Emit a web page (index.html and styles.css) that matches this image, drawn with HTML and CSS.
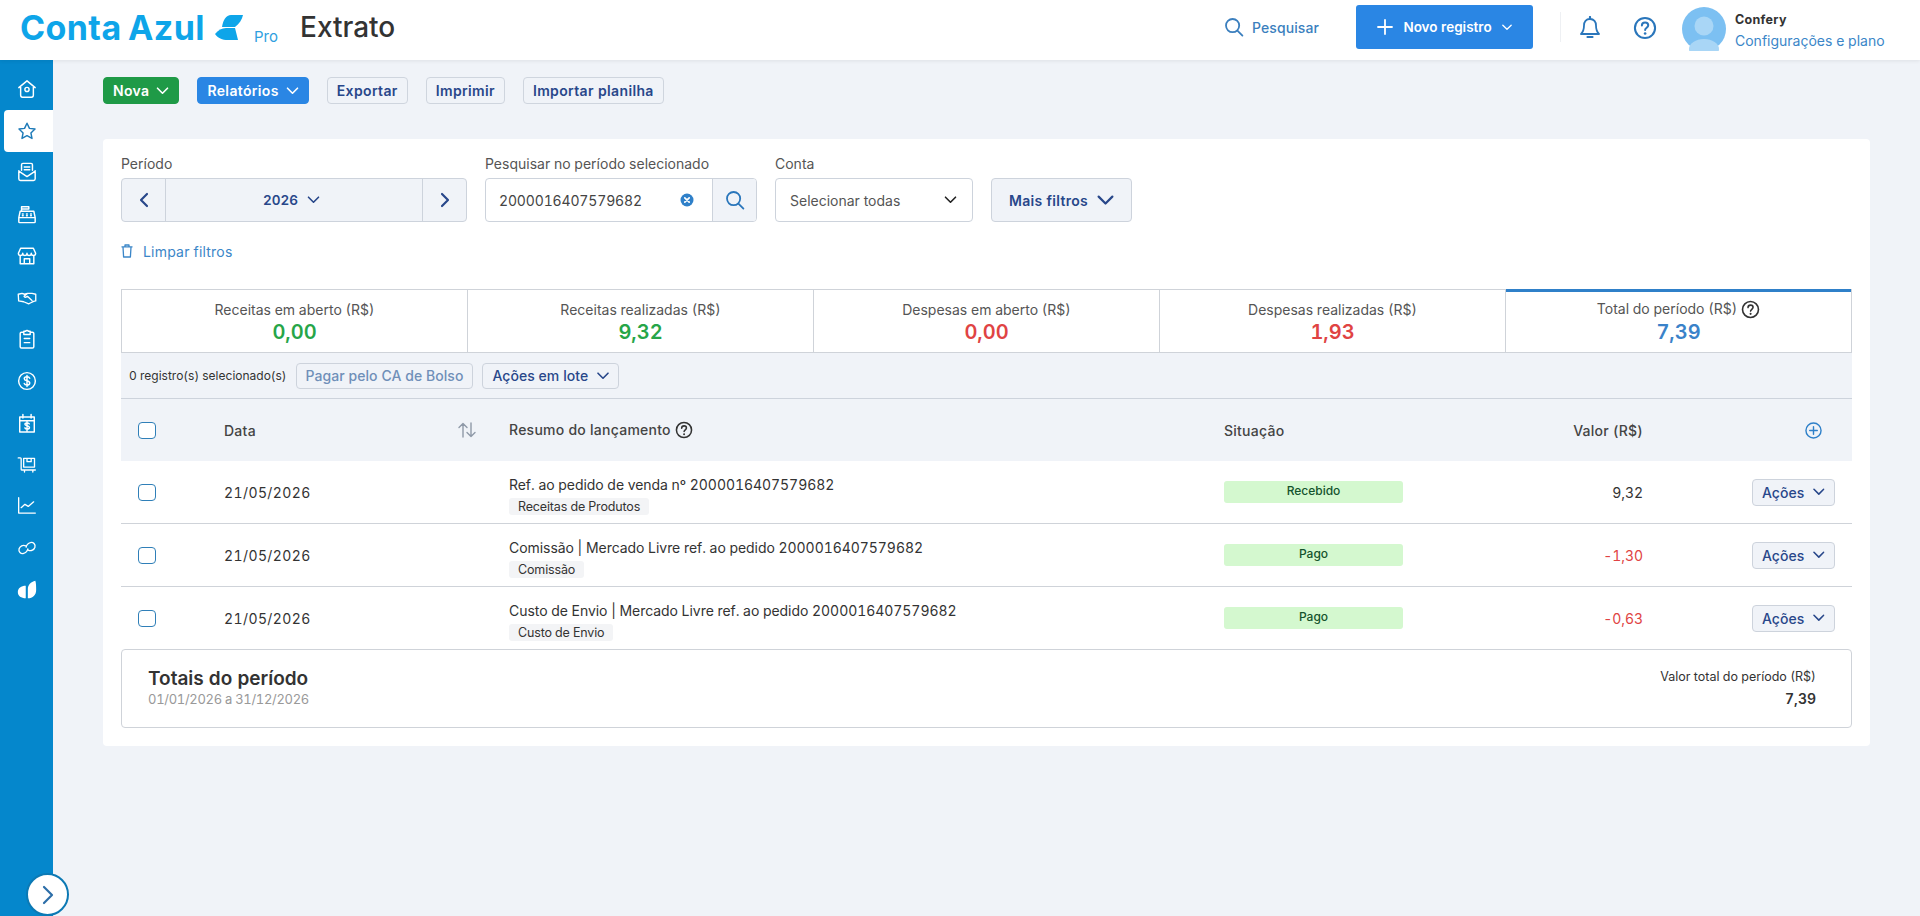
FILE: index.html
```html
<!DOCTYPE html>
<html lang="pt-BR">
<head>
  <meta charset="UTF-8" />
  <title>Extrato</title>
  <link rel="stylesheet" href="styles.css">
</head>
<body>

<svg class="sprite" width="0" height="0">
  <symbol id="chev-down" viewBox="0 0 12 8"><path d="M1 1.2l5 5 5-5" fill="none" stroke="currentColor" stroke-width="1.6" stroke-linecap="round" stroke-linejoin="round"/></symbol>
  <symbol id="help" viewBox="0 0 20 20"><circle cx="10" cy="10" r="8.4" fill="none" stroke="currentColor" stroke-width="1.7"/><path d="M7.4 8c0-1.6 1.2-2.6 2.7-2.6s2.6 1 2.6 2.3c0 2-2.6 2.1-2.6 4" fill="none" stroke="currentColor" stroke-width="1.7" stroke-linecap="round"/><circle cx="10.1" cy="14.6" r="1.1" fill="currentColor"/></symbol>
  <symbol id="search" viewBox="0 0 20 20"><circle cx="8.6" cy="8.6" r="6.6" fill="none" stroke="currentColor" stroke-width="1.8"/><path d="M13.4 13.6l5 5" fill="none" stroke="currentColor" stroke-width="1.8" stroke-linecap="round"/></symbol>
</svg>

<header class="topbar">
  <div class="brand">
    <span class="logo-text">Conta Azul</span>
    <svg class="logo-leaf" width="28" height="26" viewBox="0 0 28 26"><path d="M28 1L16 1C11 1 8 6 7 13L20 13C24 10 27 6 28 1Z" fill="#0ea5e9"/><path d="M0 20C3 16 7 14 11 14L20 14C21 18 22 22 23 26L13 26C7 26 3 24 0 20Z" fill="#0ea5e9"/></svg>
    <span class="logo-plan">Pro</span>
    <h1 class="page-title">Extrato</h1>
  </div>
  <div class="top-actions">
    <a class="top-search"><svg width="20" height="20"><use href="#search"/></svg>Pesquisar</a>
    <button class="new-btn">
      <svg width="16" height="16" viewBox="0 0 16 16"><path d="M8 1v14M1 8h14" stroke="#fff" stroke-width="1.8" stroke-linecap="round"/></svg>
      <span>Novo registro</span>
      <svg width="10" height="7"><use href="#chev-down"/></svg>
    </button>
    <span class="top-sep"></span>
    <svg class="bell" width="22" height="24" viewBox="0 0 22 24"><path d="M11 3c-4 0-6 3-6 6.500 0 4-1 6.500-3 8.500h18c-2-2-3-4.500-3-8.500C17 6 15 3 11 3Z" fill="none" stroke="currentColor" stroke-width="1.800" stroke-linejoin="round"/><path d="M11 1v2M8.500 21h5" stroke="currentColor" stroke-width="2.200" stroke-linecap="round"/></svg>
    <svg class="top-help" width="24" height="24"><use href="#help"/></svg>
    <div class="avatar">
      <svg width="44" height="44" viewBox="0 0 44 44"><circle cx="22" cy="22" r="22" fill="#7cc0f2"/><circle cx="22" cy="19" r="9.500" fill="#a9d6f6"/><ellipse cx="22" cy="42" rx="15" ry="10" fill="#a9d6f6"/></svg>
    </div>
    <div class="user">
      <strong>Confery</strong>
      <a>Configurações e plano</a>
    </div>
  </div>
</header>

<div class="layout">
  <nav class="sidebar">
    <a class="nav-item"><svg viewBox="0 0 22 22"><path d="M2 9.500L11 2l9 7.500M4 8v10c0 1.500 1 2 2 2h10c1 0 2-.5 2-2V8"/><circle cx="11" cy="11.500" r="2.300"/></svg></a>
    <a class="nav-item active"><svg viewBox="0 0 22 22"><path d="M11 2.500l2.700 5.600 6.100.8-4.500 4.200 1.200 6.100-5.500-3-5.500 3 1.200-6.100-4.500-4.200 6.100-.8Z"/></svg></a>
    <a class="nav-item"><svg viewBox="0 0 22 22"><path d="M5 9V3c0-1 .6-1.500 1.500-1.500h9c.9 0 1.500.5 1.500 1.500v6M8 5.500h6M8 8.500h6M2 9.500v9c0 1 .7 1.800 1.800 1.800h14.400c1.100 0 1.800-.8 1.800-1.800v-9M2 10l9 6 9-6"/></svg></a>
    <a class="nav-item"><svg viewBox="0 0 22 22"><path d="M5 8V3h8v2.500H5M3.500 8h15L20 15v4.500c0 .5-.5 1-1 1H3c-.5 0-1-.5-1-1V15ZM2 15h18M6 11h.8M10.500 11h.8M15 11h.8M6 13h.8M10.500 13h.8M15 13h.8"/></svg></a>
    <a class="nav-item"><svg viewBox="0 0 22 22"><path d="M4 2.500h14l2.500 5.500c0 1.500-1.200 2.500-2.400 2.500s-2.400-1-2.400-2.500c0 1.500-1.200 2.500-2.400 2.500S11 9.500 11 8c0 1.500-1.100 2.500-2.300 2.500S6.300 9.500 6.300 8c0 1.500-1.200 2.500-2.400 2.500S1.500 9.500 1.500 8ZM3.500 10.500v9h15v-9M8 19.500V14h6v5.500"/></svg></a>
    <a class="nav-item"><svg viewBox="0 0 24 24"><path d="M1.500 7.500L6 6.500l3 1L12.500 6.500h5.500l4.500 1v8l-2.500.5-4 2-2 1-6-2.500-6-1ZM12.500 6.500L8.500 10c1 1.500 2.500 1.500 4 0l5.500 5"/></svg></a>
    <a class="nav-item"><svg viewBox="0 0 22 22"><path d="M7.500 3.500H5c-1 0-1.500.5-1.500 1.500v14.500c0 1 .5 1.500 1.500 1.500h12c1 0 1.500-.5 1.500-1.500V5c0-1-.5-1.500-1.500-1.500h-2.500M7.500 2.500h2c.3-1 2.700-1 3 0h2v3.500h-7ZM8 10.500h6M8 15h6"/></svg></a>
    <a class="nav-item"><svg viewBox="0 0 22 22"><circle cx="11" cy="11" r="9.200"/><path d="M14 8c-.5-1.200-1.700-1.700-3-1.700-1.600 0-3 .8-3 2.200 0 3 6 1.500 6 4.700 0 1.400-1.400 2.300-3 2.300-1.400 0-2.600-.6-3-1.800M11 5v12"/></svg></a>
    <a class="nav-item"><svg viewBox="0 0 22 22"><path d="M3 4.500h16v16.500H3ZM3 8.500h16M6.500 1.500v4M15.500 1.500v4M13.500 12c-.5-.8-1.400-1.100-2.500-1.100-1.300 0-2.300.6-2.300 1.600 0 2.200 5 1 5 3.400 0 1-1.100 1.700-2.500 1.700-1.200 0-2.100-.5-2.500-1.300M11 9.500v10"/></svg></a>
    <a class="nav-item"><svg viewBox="0 0 24 22"><path d="M1.500 2.500H4c.6 0 1 .4 1 1V16c0 .6.4 1 1 1h16M8 3h13v10.500H8ZM12 3v4h5V3M9 17v2.500M19 17v2.500"/></svg></a>
    <a class="nav-item"><svg viewBox="0 0 24 22"><path d="M2 1v18.500h20M5 13l4.500-4 4 2.500L20 6"/></svg></a>
    <a class="nav-item"><svg viewBox="0 0 24 22"><path d="M10.500 8.500C7 6.500 3.500 9 2.500 12c-1 3.500 2 6.500 5.500 5.500 2.500-.5 5-3.500 5-5.500M13.500 13.500c3.500 2 7 -.5 8-3.500 1-3.500-2-6.500-5.500-5.500C13.500 5 11 8 11 10"/></svg></a>
    <a class="nav-item"><svg viewBox="0 0 24 24"><path class="solid" d="M10.500 7v15C5 22 1 19.500 1 14.500 1 10 5 7 10.500 7ZM13 22V11c0-5 3.500-8.500 9-10 1 3 1 7 1 11 0 6-4 10-10 10Z"/></svg></a>
    <button class="collapse"><svg width="12" height="20" viewBox="0 0 12 20"><path d="M2 2l8 8-8 8" fill="none" stroke="#2c6ea8" stroke-width="2.200" stroke-linecap="round" stroke-linejoin="round"/></svg></button>
  </nav>

  <main class="content">
    <div class="toolbar">
      <button class="tb-btn green">Nova <svg width="13" height="8"><use href="#chev-down"/></svg></button>
      <button class="tb-btn blue">Relatórios <svg width="13" height="8"><use href="#chev-down"/></svg></button>
      <button class="tb-btn">Exportar</button>
      <button class="tb-btn">Imprimir</button>
      <button class="tb-btn">Importar planilha</button>
    </div>

    <section class="card">
      <div class="filters">
        <div class="field period-field">
          <label>Período</label>
          <div class="period">
            <button class="period-arrow"><svg width="12" height="16" viewBox="0 0 12 16"><path d="M9 2L3 8l6 6" fill="none" stroke="currentColor" stroke-width="2.200" stroke-linecap="round" stroke-linejoin="round"/></svg></button>
            <button class="period-year">2026 <svg width="13" height="8"><use href="#chev-down"/></svg></button>
            <button class="period-arrow"><svg width="12" height="16" viewBox="0 0 12 16"><path d="M3 2l6 6-6 6" fill="none" stroke="currentColor" stroke-width="2.200" stroke-linecap="round" stroke-linejoin="round"/></svg></button>
          </div>
        </div>
        <div class="field search-field">
          <label>Pesquisar no período selecionado</label>
          <div class="search-box">
            <span class="search-value">2000016407579682</span>
            <svg class="clear" width="14" height="14" viewBox="0 0 14 14"><circle cx="7" cy="7" r="6.500" fill="#2f80c9"/><path d="M4.800 4.800l4.400 4.400M9.200 4.800l-4.400 4.400" stroke="#fff" stroke-width="1.700" stroke-linecap="round"/></svg>
            <button class="search-btn"><svg width="20" height="20"><use href="#search"/></svg></button>
          </div>
        </div>
        <div class="field conta-field">
          <label>Conta</label>
          <div class="select"><span>Selecionar todas</span><svg width="13" height="8"><use href="#chev-down"/></svg></div>
        </div>
        <button class="more-btn">Mais filtros <svg width="17" height="11"><use href="#chev-down"/></svg></button>
      </div>

      <a class="clear-filters">
        <svg width="12" height="14" viewBox="0 0 12 14"><path d="M.5 2.800h11M4 2.500V1h4v1.500M2 3l.6 10h6.800L10 3" fill="none" stroke="currentColor" stroke-width="1.300" stroke-linejoin="round"/></svg>
        Limpar filtros
      </a>

      <div class="summary">
        <div class="sum-cell"><span>Receitas em aberto (R$)</span><b class="pos">0,00</b></div>
        <div class="sum-cell"><span>Receitas realizadas (R$)</span><b class="pos">9,32</b></div>
        <div class="sum-cell"><span>Despesas em aberto (R$)</span><b class="neg">0,00</b></div>
        <div class="sum-cell"><span>Despesas realizadas (R$)</span><b class="neg">1,93</b></div>
        <div class="sum-cell current"><span>Total do período (R$) <svg width="19" height="19"><use href="#help"/></svg></span><b class="total">7,39</b></div>
      </div>

      <div class="bulk">
        <span class="bulk-count">0 registro(s) selecionado(s)</span>
        <button class="sm-btn disabled">Pagar pelo CA de Bolso</button>
        <button class="sm-btn">Ações em lote <svg width="12" height="8"><use href="#chev-down"/></svg></button>
      </div>

      <div class="row head">
        <span class="check"></span>
        <span class="data-col">Data
          <svg class="sort" width="18" height="16" viewBox="0 0 18 16"><path d="M5 15V1.500M1 5.500l4-4 4 4M13 1v13.500M9 10.500l4 4 4-4" fill="none" stroke="#8f99a8" stroke-width="1.400" stroke-linecap="round" stroke-linejoin="round"/></svg>
        </span>
        <span>Resumo do lançamento <svg class="head-help" width="18" height="18"><use href="#help"/></svg></span>
        <span>Situação</span>
        <span class="value">Valor (R$)</span>
        <span class="col-end"><svg class="add" width="17" height="17" viewBox="0 0 18 18"><circle cx="9" cy="9" r="8" fill="none" stroke="#2f80c9" stroke-width="1.500"/><path d="M9 5v8M5 9h8" stroke="#2f80c9" stroke-width="1.500" stroke-linecap="round"/></svg></span>
      </div>

      <div class="row item">
        <span class="check"></span>
        <span class="date">21/05/2026</span>
        <div class="desc"><span>Ref. ao pedido de venda nº 2000016407579682</span><em class="tag">Receitas de Produtos</em></div>
        <span class="status">Recebido</span>
        <span class="value">9,32</span>
        <span class="col-end"><button class="sm-btn">Ações <svg width="12" height="8"><use href="#chev-down"/></svg></button></span>
      </div>
      <div class="row item">
        <span class="check"></span>
        <span class="date">21/05/2026</span>
        <div class="desc"><span>Comissão | Mercado Livre ref. ao pedido 2000016407579682</span><em class="tag">Comissão</em></div>
        <span class="status">Pago</span>
        <span class="value neg">-1,30</span>
        <span class="col-end"><button class="sm-btn">Ações <svg width="12" height="8"><use href="#chev-down"/></svg></button></span>
      </div>
      <div class="row item last">
        <span class="check"></span>
        <span class="date">21/05/2026</span>
        <div class="desc"><span>Custo de Envio | Mercado Livre ref. ao pedido 2000016407579682</span><em class="tag">Custo de Envio</em></div>
        <span class="status">Pago</span>
        <span class="value neg">-0,63</span>
        <span class="col-end"><button class="sm-btn">Ações <svg width="12" height="8"><use href="#chev-down"/></svg></button></span>
      </div>

      <div class="totals">
        <div class="totals-left">
          <strong>Totais do período</strong>
          <span>01/01/2026 a 31/12/2026</span>
        </div>
        <div class="totals-right">
          <span>Valor total do período (R$)</span>
          <b>7,39</b>
        </div>
      </div>
    </section>
  </main>
</div>

</body>
</html>
```

FILE: styles.css
```css
* {
  box-sizing: border-box;
}

body {
  margin: 0;
  height: 916px;
  overflow: hidden;
  font-family: Inter, 'Open Sans', sans-serif;
  font-size: 14px;
  font-variant-numeric: tabular-nums;
  color: #333;
  background-color: #f0f3f8;
}

button {
  font-family: inherit;
  font-variant-numeric: inherit;
  cursor: pointer;
}

.sprite {
  position: absolute;
}

/* topo */
.topbar {
  height: 60px;
  background: #fff;
  display: flex;
  align-items: center;
  justify-content: space-between;
  padding: 0 35px 6px 20px;
  box-shadow: 0 1px 4px rgba(0,0,0,0.08);
  position: relative;
  z-index: 2;
}

.brand {
  display: flex;
  align-items: center;
}

.logo-text {
  font-size: 34px;
  font-weight: 700;
  letter-spacing: 0.4px;
  word-spacing: -3px;
  color: #0ea5e9;
  width: 195px;
  white-space: nowrap;
}

.logo-plan {
  font-size: 15px;
  color: #2f9fe0;
  margin: 18px 0 0 11px;
  width: 46px;
}

.page-title {
  margin: 0;
  font-size: 28px;
  font-weight: 500;
  color: #333;
}

.top-actions {
  display: flex;
  align-items: center;
}

.top-search {
  display: flex;
  align-items: center;
  gap: 8px;
  color: #3b7fbe;
  font-size: 14px;
  font-weight: 500;
  letter-spacing: 0.1px;
  margin-right: 37px;
}

.new-btn {
  width: 177px;
  height: 44px;
  border: none;
  border-radius: 3px;
  background: #2a86e4;
  color: #fff;
  font-size: 13.500px;
  font-weight: 600;
  display: flex;
  align-items: center;
  justify-content: center;
  gap: 10px;
}

.top-sep {
  width: 1px;
  height: 30px;
  background: #eef0f3;
  margin: 0 18px 0 27px;
}

.bell {
  color: #2a76bb;
  margin-top: 2px;
}

.top-help {
  color: #2a76bb;
  margin: 2px 25px 0 32px;
}

.avatar {
  height: 44px;
  margin: 4px 9px 0 0;
}

.user {
  display: flex;
  flex-direction: column;
  gap: 5px;
  font-size: 14px;
  width: 150px;
  margin-top: 6px;
}

.user strong {
  font-weight: 700;
  font-size: 12.500px;
  letter-spacing: 0.3px;
}

.user a {
  color: #3b86c8;
}

/* menu lateral */
.layout {
  display: flex;
  height: 856px;
}

.sidebar {
  width: 53px;
  flex-shrink: 0;
  background: #0587cc;
  padding-top: 8px;
  position: relative;
}

.nav-item {
  height: 41.750px;
  display: flex;
  align-items: center;
  justify-content: center;
  color: #fff;
  margin-left: 4px;
  padding-right: 4px;
}

.nav-item svg {
  width: 20px;
  height: 20px;
  fill: none;
  stroke: currentColor;
  stroke-width: 1.600;
  stroke-linecap: round;
  stroke-linejoin: round;
}

.nav-item .solid {
  fill: #fff;
  stroke: none;
}

.nav-item.active {
  background: #fff;
  color: #1d7ab8;
  border-radius: 4px 0 0 4px;
}

.collapse {
  position: absolute;
  left: 26px;
  bottom: 0;
  width: 43px;
  height: 43px;
  border-radius: 50%;
  background: #fff;
  border: 2px solid #0c79b4;
  display: flex;
  align-items: center;
  justify-content: center;
}

.content {
  flex: 1;
  padding: 17px 50px;
}

.toolbar {
  display: flex;
  gap: 18px;
  margin-bottom: 35px;
}

.tb-btn {
  height: 27px;
  padding: 0 9px;
  border: 1px solid #cfd5de;
  border-radius: 4px;
  background: #f0f3f8;
  color: #28478a;
  font-size: 14px;
  font-weight: 600;
  letter-spacing: 0.35px;
  display: flex;
  align-items: center;
  gap: 7px;
}

.tb-btn.green {
  background: #1f9a47;
  border-color: #1f9a47;
  color: #fff;
}

.tb-btn.blue {
  background: #2a86e4;
  border-color: #2a86e4;
  color: #fff;
}

/* cartao */
.card {
  background: #fff;
  border-radius: 4px;
  padding: 15px 18px 18px;
  height: 607px;
}

.filters {
  display: flex;
  align-items: flex-end;
  gap: 18px;
}

.field label {
  display: block;
  height: 24px;
  line-height: 20px;
  font-size: 14px;
  color: #555;
}

.period-field {
  width: 346px;
}

.search-field {
  width: 272px;
}

.conta-field {
  width: 198px;
}

.period {
  height: 44px;
  display: flex;
  border: 1px solid #cdd3dc;
  border-radius: 4px;
  background: #f0f3f8;
  overflow: hidden;
}

.period button {
  border: none;
  background: none;
  color: #28478a;
  display: flex;
  align-items: center;
  justify-content: center;
}

.period-arrow {
  width: 43px;
}

.period-year {
  flex: 1;
  gap: 9px;
  padding: 0 5px 0 0;
  font-size: 13.500px;
  font-weight: 600;
  border-left: 1px solid #cdd3dc !important;
  border-right: 1px solid #cdd3dc !important;
}

.search-box {
  height: 44px;
  display: flex;
  align-items: center;
  border: 1px solid #cdd3dc;
  border-radius: 4px;
  padding-left: 13px;
  overflow: hidden;
}

.search-value {
  flex: 1;
  font-size: 14px;
  letter-spacing: -0.15px;
  color: #444;
}

.clear {
  margin-right: 18px;
}

.search-btn {
  width: 44px;
  height: 44px;
  border: none;
  border-left: 1px solid #cdd3dc;
  background: #f0f3f8;
  color: #2a76bb;
  display: flex;
  align-items: center;
  justify-content: center;
}

.select {
  height: 44px;
  display: flex;
  align-items: center;
  justify-content: space-between;
  padding: 0 15px 0 14px;
  border: 1px solid #cdd3dc;
  border-radius: 4px;
  font-size: 14px;
  color: #555;
}

.select svg {
  color: #222;
}

.more-btn {
  width: 141px;
  height: 44px;
  border: 1px solid #cdd3dc;
  border-radius: 4px;
  background: #f0f3f8;
  color: #28478a;
  font-size: 14px;
  font-weight: 600;
  letter-spacing: 0.3px;
  display: flex;
  align-items: center;
  justify-content: center;
  gap: 9px;
}

.clear-filters {
  display: flex;
  align-items: center;
  gap: 10px;
  height: 20px;
  margin: 19px 0 28px;
  color: #3b86c8;
  font-size: 14px;
  letter-spacing: 0.2px;
}

/* resumo */
.summary {
  display: flex;
  height: 64px;
  border: 1px solid #cfd3d9;
  border-width: 1px 0;
}

.sum-cell {
  flex: 1;
  display: flex;
  flex-direction: column;
  align-items: center;
  justify-content: center;
  gap: 1px;
  padding-top: 2px;
  border-left: 1px solid #cfd3d9;
}

.sum-cell:last-child {
  border-right: 1px solid #cfd3d9;
}

.sum-cell span {
  display: flex;
  align-items: center;
  gap: 4px;
  font-size: 14px;
  color: #555;
  line-height: 18px;
}

.sum-cell b {
  font-size: 20px;
  font-weight: 600;
  line-height: 24px;
}

.sum-cell.current {
  box-shadow: inset 0 3px 0 #2f80c9;
  margin-top: -1px;
}

.sum-cell.current svg {
  color: #333;
}

.pos {
  color: #26a548;
}

.neg {
  color: #e04343;
}

.total {
  color: #3a82c9;
}

/* lote */
.bulk {
  height: 45px;
  background: #f0f3f8;
  display: flex;
  align-items: center;
  padding-left: 8px;
  gap: 9px;
}

.bulk-count {
  font-size: 12px;
}

.sm-btn {
  height: 26px;
  padding: 0 9px;
  border: 1px solid #cdd3dc;
  border-radius: 4px;
  background: #f0f3f8;
  color: #28478a;
  font-size: 14px;
  font-weight: 500;
  letter-spacing: 0.05px;
  display: inline-flex;
  align-items: center;
  gap: 9px;
}

.sm-btn.disabled {
  color: #6f8fb8;
}

/* tabela */
.row {
  display: grid;
  grid-template-columns: 86px 285px 715px 179px 240px 1fr;
  align-items: center;
  padding-left: 17px;
  font-size: 14px;
  letter-spacing: -0.05px;
}

.row.head {
  height: 63px;
  background: #f0f3f8;
  border-top: 1px solid #cdd3dc;
  font-weight: 500;
  letter-spacing: 0.25px;
  color: #444;
}

.row.item {
  height: 63px;
  border-bottom: 1px solid #cfd3d9;
}

.row.item.last {
  height: 62px;
  border-bottom: none;
}

.check {
  width: 18px;
  height: 17px;
  border: 1.500px solid #2f7fb8;
  border-radius: 4px;
  background: #fff;
}

.date {
  letter-spacing: 0.4px;
}

.data-col {
  display: flex;
  align-items: center;
  justify-content: space-between;
  padding-right: 33px;
}

.head-help {
  vertical-align: -4px;
  color: #333;
}

.desc {
  display: flex;
  flex-direction: column;
  align-items: flex-start;
  gap: 5px;
  padding-top: 6px;
}

.tag {
  font-style: normal;
  font-size: 12.500px;
  background: #f3f4f6;
  border-radius: 3px;
  padding: 0 9px;
  height: 17px;
  line-height: 17px;
  letter-spacing: -0.15px;
}

.status {
  height: 22px;
  border-radius: 3px;
  background: #d4f8cf;
  color: #14532d;
  font-size: 12px;
  font-weight: 500;
  letter-spacing: 0;
  text-align: center;
  line-height: 20px;
}

.value {
  text-align: right;
}

.col-end {
  display: flex;
  justify-content: flex-end;
  padding-right: 17px;
}

.col-end .sm-btn {
  width: 83px;
  height: 27px;
  justify-content: center;
}

.add {
  margin-right: 13px;
}

/* totais */
.totals {
  height: 79px;
  border: 1px solid #cfd3d9;
  border-radius: 4px;
  display: flex;
  justify-content: space-between;
  align-items: center;
  padding: 0 35px 4px 26px;
}

.totals-left,
.totals-right {
  display: flex;
  flex-direction: column;
}

.totals-left strong {
  font-size: 19px;
  font-weight: 600;
  line-height: 25px;
}

.totals-left span {
  font-size: 13px;
  letter-spacing: -0.3px;
  color: #999;
  line-height: 17px;
}

.totals-right {
  align-items: flex-end;
  gap: 6px;
  padding-top: 2px;
  font-size: 12.500px;
}

.totals-right b {
  font-size: 14px;
  font-weight: 600;
}
```
